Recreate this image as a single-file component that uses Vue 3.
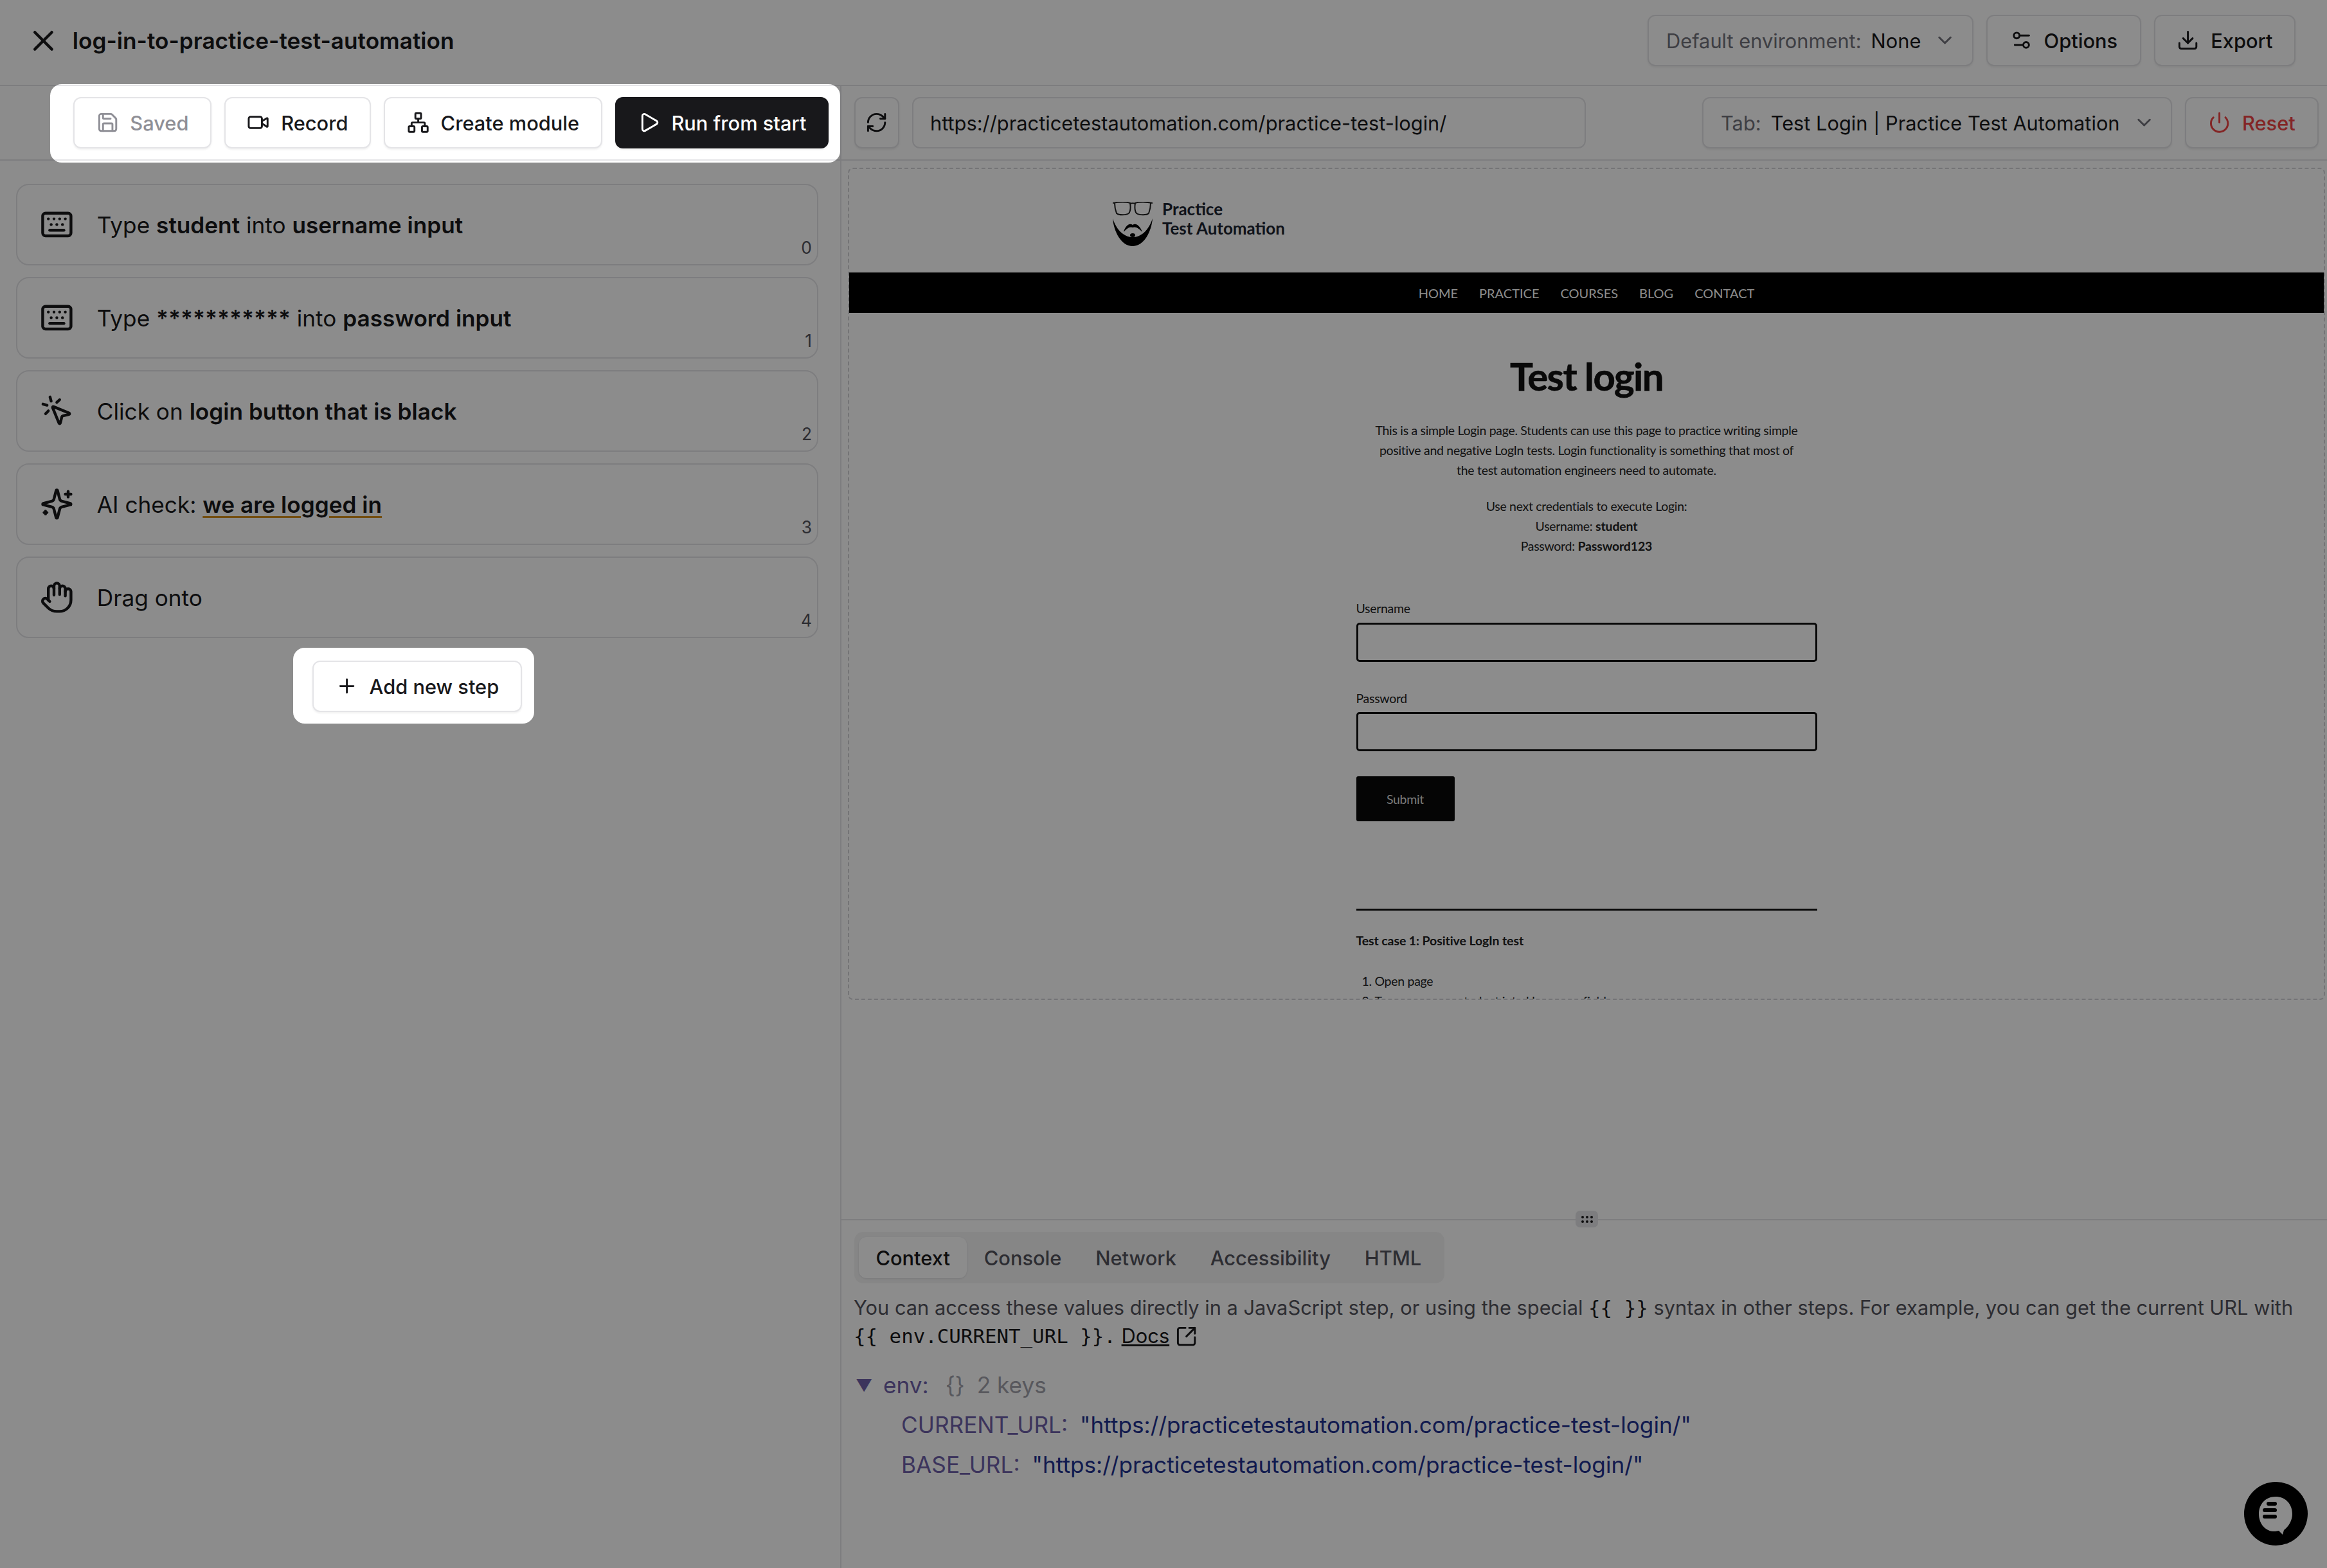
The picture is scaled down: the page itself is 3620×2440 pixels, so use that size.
<script setup>
import { h } from 'vue'

const paths = {
  x: ['M18 6 6 18', 'm6 6 12 12'],
  save: ['M15.2 3a2 2 0 0 1 1.4.6l3.8 3.8a2 2 0 0 1 .6 1.4V19a2 2 0 0 1-2 2H5a2 2 0 0 1-2-2V5a2 2 0 0 1 2-2z', 'M17 21v-7a1 1 0 0 0-1-1H8a1 1 0 0 0-1 1v7', 'M7 3v4a1 1 0 0 0 1 1h7'],
  video: ['m16 13 5.223 3.482a.5.5 0 0 0 .777-.416V7.87a.5.5 0 0 0-.752-.432L16 10.5', 'M4 6h10a2 2 0 0 1 2 2v8a2 2 0 0 1-2 2H4a2 2 0 0 1-2-2V8a2 2 0 0 1 2-2z'],
  network: ['M10 2h4a1 1 0 0 1 1 1v4a1 1 0 0 1-1 1h-4a1 1 0 0 1-1-1V3a1 1 0 0 1 1-1z', 'M17 16h4a1 1 0 0 1 1 1v4a1 1 0 0 1-1 1h-4a1 1 0 0 1-1-1v-4a1 1 0 0 1 1-1z', 'M3 16h4a1 1 0 0 1 1 1v4a1 1 0 0 1-1 1H3a1 1 0 0 1-1-1v-4a1 1 0 0 1 1-1z', 'M5 16v-3a1 1 0 0 1 1-1h12a1 1 0 0 1 1 1v3', 'M12 12V8'],
  play: ['M5 5a2 2 0 0 1 3.008-1.728l11.997 6.998a2 2 0 0 1 .003 3.458l-12 7A2 2 0 0 1 5 19z'],
  refresh: ['M3 12a9 9 0 0 1 9-9 9.75 9.75 0 0 1 6.74 2.74L21 8', 'M21 3v5h-5', 'M21 12a9 9 0 0 1-9 9 9.75 9.75 0 0 1-6.74-2.74L3 16', 'M8 16H3v5'],
  chevron: ['m6 9 6 6 6-6'],
  settings: ['M20 7h-9', 'M14 17H5', 'M20 17a3 3 0 1 1-6 0 3 3 0 0 1 6 0z', 'M10 7a3 3 0 1 1-6 0 3 3 0 0 1 6 0z'],
  download: ['M21 15v4a2 2 0 0 1-2 2H5a2 2 0 0 1-2-2v-4', 'm7 10 5 5 5-5', 'M12 15V3'],
  power: ['M12 2v10', 'M18.4 6.6a9 9 0 1 1-12.77.04'],
  plus: ['M5 12h14', 'M12 5v14'],
  external: ['M21 13v6a2 2 0 0 1-2 2H5a2 2 0 0 1-2-2V5a2 2 0 0 1 2-2h6', 'm21 3-9 9', 'M15 3h6v6'],
  keyboard: ['M10 8h.01', 'M12 12h.01', 'M14 8h.01', 'M16 12h.01', 'M18 8h.01', 'M6 8h.01', 'M7 16h10', 'M8 12h.01', 'M4 4h16a2 2 0 0 1 2 2v12a2 2 0 0 1-2 2H4a2 2 0 0 1-2-2V6a2 2 0 0 1 2-2z'],
  click: ['M14 4.1 12 6', 'm5.1 8-2.9-.8', 'm6 12-1.9 2', 'M7.2 2.2 8 5.1', 'M9.037 9.69a.498.498 0 0 1 .653-.653l11 4.5a.5.5 0 0 1-.074.949l-4.349 1.041a1 1 0 0 0-.74.739l-1.04 4.35a.5.5 0 0 1-.95.074z'],
  sparkles: ['M9.937 15.5A2 2 0 0 0 8.5 14.063l-6.135-1.582a.5.5 0 0 1 0-.962L8.5 9.936A2 2 0 0 0 9.937 8.5l1.582-6.135a.5.5 0 0 1 .963 0L14.063 8.5A2 2 0 0 0 15.5 9.937l6.135 1.581a.5.5 0 0 1 0 .964L15.5 14.063a2 2 0 0 0-1.437 1.437l-1.582 6.135a.5.5 0 0 1-.963 0z', 'M20 3v4', 'M22 5h-4', 'M4 17v2', 'M5 18H3'],
  hand: ['M18 11V6a2 2 0 0 0-2-2a2 2 0 0 0-2 2', 'M14 10V4a2 2 0 0 0-2-2a2 2 0 0 0-2 2v2', 'M10 10.5V6a2 2 0 0 0-2-2a2 2 0 0 0-2 2v8', 'M18 8a2 2 0 1 1 4 0v6a8 8 0 0 1-8 8h-2c-2.8 0-4.5-.86-5.99-2.34l-3.6-3.6a2 2 0 0 1 2.83-2.82L7 15']
}

const Icon = (props) =>
  h('svg', { width: props.size, height: props.size, viewBox: '0 0 24 24', fill: 'none', stroke: 'currentColor', 'stroke-width': 2, 'stroke-linecap': 'round', 'stroke-linejoin': 'round' },
    paths[props.name].map((d) => h('path', { d })))
Icon.props = ['name', 'size']

const steps = [
  { icon: 'keyboard', parts: [['Type '], ['student', 'b'], [' into '], ['username input', 'b']] },
  { icon: 'keyboard', parts: [['Type '], ['***********', 'b'], [' into '], ['password input', 'b']] },
  { icon: 'click', parts: [['Click on '], ['login button that is black', 'b']] },
  { icon: 'sparkles', parts: [['AI check: '], ['we are logged in', 'u']] },
  { icon: 'hand', parts: [['Drag onto']] }
]

const tabs = ['Context', 'Console', 'Network', 'Accessibility', 'HTML']
const navItems = ['Home', 'Practice', 'Courses', 'Blog', 'Contact']

const hole = (x, y, w, h2, r) =>
  `M${x + r} ${y}H${x + w - r}a${r} ${r} 0 0 1 ${r} ${r}V${y + h2 - r}a${r} ${r} 0 0 1 -${r} ${r}H${x + r}a${r} ${r} 0 0 1 -${r} -${r}V${y + r}a${r} ${r} 0 0 1 ${r} -${r}Z`
const overlayPath = `M0 0H3620V2440H0Z ${hole(78, 131, 1229, 122, 18)} ${hole(456, 1008, 375, 118, 18)}`
</script>

<template>
  <div class="app">
    <header class="header">
      <div class="title-wrap">
        <Icon name="x" :size="52.8" class="close" />
        <span class="title">log-in-to-practice-test-automation</span>
      </div>
      <div class="actions">
        <div class="btn select env">
          <span class="muted">Default environment:</span>
          <span>None</span>
          <Icon name="chevron" :size="35.2" class="chev" />
        </div>
        <div class="btn opt"><Icon name="settings" :size="35.2" />Options</div>
        <div class="btn exp"><Icon name="download" :size="35.2" />Export</div>
      </div>
    </header>

    <div class="workspace">
      <aside class="left">
        <div class="toolbar left-toolbar">
          <div class="btn saved"><Icon name="save" :size="35.2" />Saved</div>
          <div class="btn record"><Icon name="video" :size="35.2" />Record</div>
          <div class="btn module"><Icon name="network" :size="35.2" />Create module</div>
          <div class="btn run"><Icon name="play" :size="35.2" />Run from start</div>
        </div>
        <div class="steps">
          <div v-for="(s, i) in steps" :key="i" class="step">
            <Icon :name="s.icon" :size="52.8" class="step-icon" />
            <span class="step-text"><span v-for="(p, j) in s.parts" :key="j" :class="p[1]">{{ p[0] }}</span></span>
            <span class="step-num">{{ i }}</span>
          </div>
          <div class="add-row">
            <div class="btn add"><Icon name="plus" :size="35.2" />Add new step</div>
          </div>
        </div>
      </aside>

      <main class="right">
        <div class="toolbar right-toolbar">
          <div class="btn icon-btn"><Icon name="refresh" :size="35.2" /></div>
          <div class="url">https://practicetestautomation.com/practice-test-login/</div>
          <div class="spacer"></div>
          <div class="btn select tab-select">
            <span class="muted">Tab:</span>
            <span>Test Login | Practice Test Automation</span>
            <Icon name="chevron" :size="35.2" class="chev" />
          </div>
          <div class="btn reset"><Icon name="power" :size="35.2" />Reset</div>
        </div>

        <section class="preview">
          <div class="site-top">
            <svg class="logo" width="62" height="70" viewBox="0 0 62 70">
              <g fill="none" stroke="#222" stroke-width="2">
                <path d="M0 2C10 0 22 0 27 2C28 8 28 14 25 18C21 21 9 21 6 18C4 13 3 8 3 2" />
                <path d="M62 2C52 0 40 0 35 2C34 8 34 14 37 18C41 21 53 21 56 18C58 13 59 8 59 2" />
                <path d="M27 3C29 2 33 2 35 3" />
              </g>
              <path fill="#000" d="M0 26C2 48 14 69 31 69C48 69 60 48 62 26C58 38 52 46 46 50C42 53 37 55 31 55C25 55 20 53 16 50C10 46 4 38 0 26Z" />
              <path fill="#000" d="M17 47C19 39 25 32 31 36C37 32 43 39 46 47C41 42 36 38 31 40C26 38 22 42 17 47Z" />
              <ellipse cx="31" cy="52" rx="4" ry="3" fill="#000" />
            </svg>
            <div class="logo-text"><div>Practice</div><div>Test Automation</div></div>
          </div>
          <nav class="site-nav"><span v-for="n in navItems" :key="n">{{ n }}</span></nav>
          <div class="site-main">
            <h1>Test login</h1>
            <p class="p1">This is a simple Login page. Students can use this page to practice writing simple<br />positive and negative LogIn tests. Login functionality is something that most of<br />the test automation engineers need to automate.</p>
            <p class="p2">Use next credentials to execute Login:<br />Username: <b>student</b><br />Password: <b>Password123</b></p>
            <div class="lbl l1">Username</div>
            <div class="inp i1"></div>
            <div class="lbl l2">Password</div>
            <div class="inp i2"></div>
            <div class="submit">Submit</div>
            <div class="rule"></div>
            <div class="case">Test case 1: Positive LogIn test</div>
            <ol>
              <li>Open page</li>
              <li>Type username student into Username field</li>
            </ol>
          </div>
        </section>

        <div class="spacer"></div>

        <section class="devtools">
          <div class="handle"><i v-for="n in 6" :key="n"></i></div>
          <div class="tabs">
            <span v-for="(t, i) in tabs" :key="t" class="tab" :class="{ active: i === 0 }">{{ t }}</span>
          </div>
          <p class="help">You can access these values directly in a JavaScript step, or using the special <code>{{ '{' + '{ }' + '}' }}</code> syntax in other steps. For example, you can get the current URL with <code>{{ '{' + '{ env.CURRENT_URL }' + '}' }}.</code> <span class="docs">Docs</span> <Icon name="external" :size="35.2" class="ext" /></p>
          <div class="json">
            <div class="json-row root"><span class="caret">▼</span><span class="key">env:</span><span class="meta">{}</span><span class="meta">2 keys</span></div>
            <div class="json-row child"><span class="key">CURRENT_URL:</span><span class="val">"https://practicetestautomation.com/practice-test-login/"</span></div>
            <div class="json-row child"><span class="key">BASE_URL:</span><span class="val">"https://practicetestautomation.com/practice-test-login/"</span></div>
          </div>
        </section>
      </main>
    </div>

    <div class="chat">
      <svg width="99" height="99" viewBox="0 0 99 99">
        <circle cx="49.5" cy="49.5" r="49.5" fill="#000" />
        <path fill="#fff" d="M49 23C64 23 75 34 75 50C75 60 69 70 62 75L60 82L54 76C50 77 47 77 45 77C32 76 23 64 23 50C23 34 34 23 49 23Z" />
        <rect x="35" y="31" width="16" height="6" rx="3" fill="#000" />
        <rect x="29" y="41" width="22" height="6" rx="3" fill="#000" />
        <rect x="29" y="51" width="22" height="6" rx="3" fill="#000" />
      </svg>
    </div>

    <svg class="overlay" width="3620" height="2440" viewBox="0 0 3620 2440">
      <path :d="overlayPath" fill="#000" fill-opacity="0.45" fill-rule="evenodd" />
    </svg>
  </div>
</template>

<style>
html, body { margin: 0; background: #fff; }
</style>

<style scoped>
.app {
  position: relative;
  width: 3620px;
  height: 2440px;
  overflow: hidden;
  background: #fff;
  color: #18181b;
  font-family: Inter, "Liberation Sans", sans-serif;
  font-size: 30.8px;
  display: flex;
  flex-direction: column;
}
.header {
  height: 134px;
  box-sizing: border-box;
  border-bottom: 2px solid #e4e4e7;
  display: flex;
  align-items: center;
  justify-content: space-between;
  padding: 0 49px 6px 41px;
  flex: none;
}
.title-wrap { display: flex; align-items: center; gap: 19px; }
.title { font-size: 35.2px; font-weight: 600; }
.actions { display: flex; gap: 20px; }
.btn {
  box-sizing: border-box;
  height: 80px;
  border: 2px solid #e4e4e7;
  border-radius: 12px;
  background: #fff;
  box-shadow: 0 2px 3px rgba(0, 0, 0, 0.06);
  display: flex;
  align-items: center;
  justify-content: center;
  gap: 17.6px;
  font-size: 30.8px;
  font-weight: 500;
  white-space: nowrap;
  flex: none;
}
.select { justify-content: flex-start; padding: 0 27px; gap: 15px; font-weight: 400; }
.muted { color: #71717a; }
.chev { color: #71717a; margin-left: 5px; flex: none; }
.env { width: 507px; }
.opt { width: 241px; }
.exp { width: 220px; }
.workspace { flex: 1; display: flex; min-height: 0; }
.left {
  width: 1309px;
  box-sizing: border-box;
  border-right: 2px solid #e4e4e7;
  flex: none;
}
.toolbar {
  height: 116px;
  box-sizing: border-box;
  border-bottom: 2px solid #e4e4e7;
  display: flex;
  align-items: center;
  gap: 20px;
}
.left-toolbar { justify-content: flex-end; padding-right: 18px; }
.saved { width: 215px; color: #8f8f96; }
.record { width: 228px; }
.module { width: 340px; }
.run { width: 332px; background: #18181b; border-color: #18181b; color: #fff; }
.steps { padding: 36px 34px 0 25px; display: flex; flex-direction: column; gap: 18px; }
.step {
  position: relative;
  height: 127px;
  box-sizing: border-box;
  border: 2px solid #e4e4e7;
  border-radius: 20px;
  display: flex;
  align-items: center;
  padding-left: 35px;
  gap: 36px;
}
.step-text { font-size: 35.2px; }
.b { font-weight: 600; }
.u { font-weight: 600; text-decoration: underline; text-decoration-color: #d48f1e; text-decoration-thickness: 3px; text-underline-offset: 5px; }
.step-num { position: absolute; right: 8px; bottom: 10px; font-size: 26.4px; color: #52525b; }
.add-row { display: flex; padding-left: 461px; margin-top: 17px; }
.add { width: 326px; }
.right { flex: 1; min-width: 0; display: flex; flex-direction: column; }
.right-toolbar { padding: 0 13px 0 20px; flex: none; }
.icon-btn { width: 70px; }
.url {
  box-sizing: border-box;
  width: 1048px;
  height: 80px;
  border: 2px solid #e4e4e7;
  border-radius: 12px;
  display: flex;
  align-items: center;
  padding-left: 26px;
  font-size: 30.8px;
}
.spacer { flex: 1; }
.tab-select { width: 731px; }
.reset { width: 208px; color: #ef4444; }
.preview {
  box-sizing: border-box;
  flex: none;
  height: 1295px;
  margin: 11px 3px 0 10px;
  border: 2px dashed #d4d4d8;
  border-radius: 8px;
  overflow: hidden;
  font-family: Lato, sans-serif;
  color: #222;
}
.site-top { height: 161px; display: flex; align-items: flex-start; padding: 51px 0 0 410px; box-sizing: border-box; gap: 15px; }
.logo { flex: none; }
.logo-text { font-weight: 700; font-size: 26px; line-height: 30px; color: #1c2430; margin-top: -4px; }
.site-nav {
  height: 63px;
  background: #000;
  color: #fff;
  display: flex;
  align-items: center;
  justify-content: center;
  gap: 33px;
  font-size: 20px;
  text-transform: uppercase;
}
.site-main { width: 717px; margin: 0 auto; box-sizing: border-box; text-align: center; font-size: 19.5px; line-height: 31px; letter-spacing: -0.3px; }
.site-main b { letter-spacing: -0.15px; }
h1 { margin: 0; padding-top: 62px; font-size: 60px; line-height: 72px; font-weight: 700; color: #111; letter-spacing: -1.6px; -webkit-text-stroke: 0.6px #111; }
.p1 { margin: 33px 0 0; }
.p2 { margin: 25px 0 0; }
.lbl { text-align: left; }
.l1 { margin-top: 66px; }
.l2 { margin-top: 41px; }
.inp { box-sizing: border-box; height: 61px; border: 3px solid #111; border-radius: 5px; margin-top: 7px; }
.i2 { margin-top: 6px; }
.submit {
  width: 153px;
  height: 70px;
  margin-top: 39px;
  background: #0a0a0a;
  border-radius: 3px;
  color: #ddd;
  display: flex;
  align-items: center;
  justify-content: center;
}
.rule { height: 3px; background: #111; margin-top: 136px; }
.case { margin-top: 31px; font-weight: 700; text-align: left; letter-spacing: -0.1px; }
ol { margin: 32px 0 0; padding: 0 0 0 29px; text-align: left; }
.devtools { position: relative; height: 543px; box-sizing: border-box; border-top: 2px solid #e4e4e7; flex: none; padding: 18px 20px 0; }
.handle {
  position: absolute;
  left: 1142px;
  top: -15px;
  width: 35px;
  height: 26px;
  background: #e4e4e7;
  border-radius: 7px;
  display: grid;
  grid-template-columns: repeat(3, 4px);
  grid-template-rows: repeat(2, 4px);
  gap: 3px;
  justify-content: center;
  align-content: center;
}
.handle i { background: #18181b; border-radius: 50%; }
.tabs { display: inline-flex; height: 80px; box-sizing: border-box; padding: 8px 7px; background: #f4f4f5; border-radius: 14px; width: 918px; }
.tab { display: flex; align-items: center; padding: 0 26.4px; font-size: 30.8px; font-weight: 500; color: #52525b; border-radius: 12px; }
.tab.active { background: #fff; color: #18181b; box-shadow: 0 1px 3px rgba(0,0,0,.1); }
.help { margin: 16px 0 0 -1px; font-size: 30.8px; line-height: 44px; color: #52525b; width: 2260px; }
code { font-family: "DejaVu Sans Mono", monospace; font-size: 30.8px; color: #18181b; white-space: nowrap; }
.docs { color: #18181b; text-decoration: underline; }
.ext { vertical-align: -7px; color: #18181b; }
.json { margin-top: 23px; font-size: 35.2px; }
.json-row { display: flex; align-items: center; height: 62px; gap: 19px; }
.root .caret { font-size: 26px; color: #6e5fa8; width: 26px; margin-right: -2px; }
.root .key { margin-right: 7px; }
.root { padding-left: 2px; }
.child { padding-left: 73px; }
.key { color: #6e5fa8; }
.meta { color: #a1a1aa; }
.val { color: #20308f; }
.chat { position: absolute; left: 3491px; top: 2306px; width: 99px; height: 99px; }
.overlay { position: absolute; left: 0; top: 0; }
</style>
